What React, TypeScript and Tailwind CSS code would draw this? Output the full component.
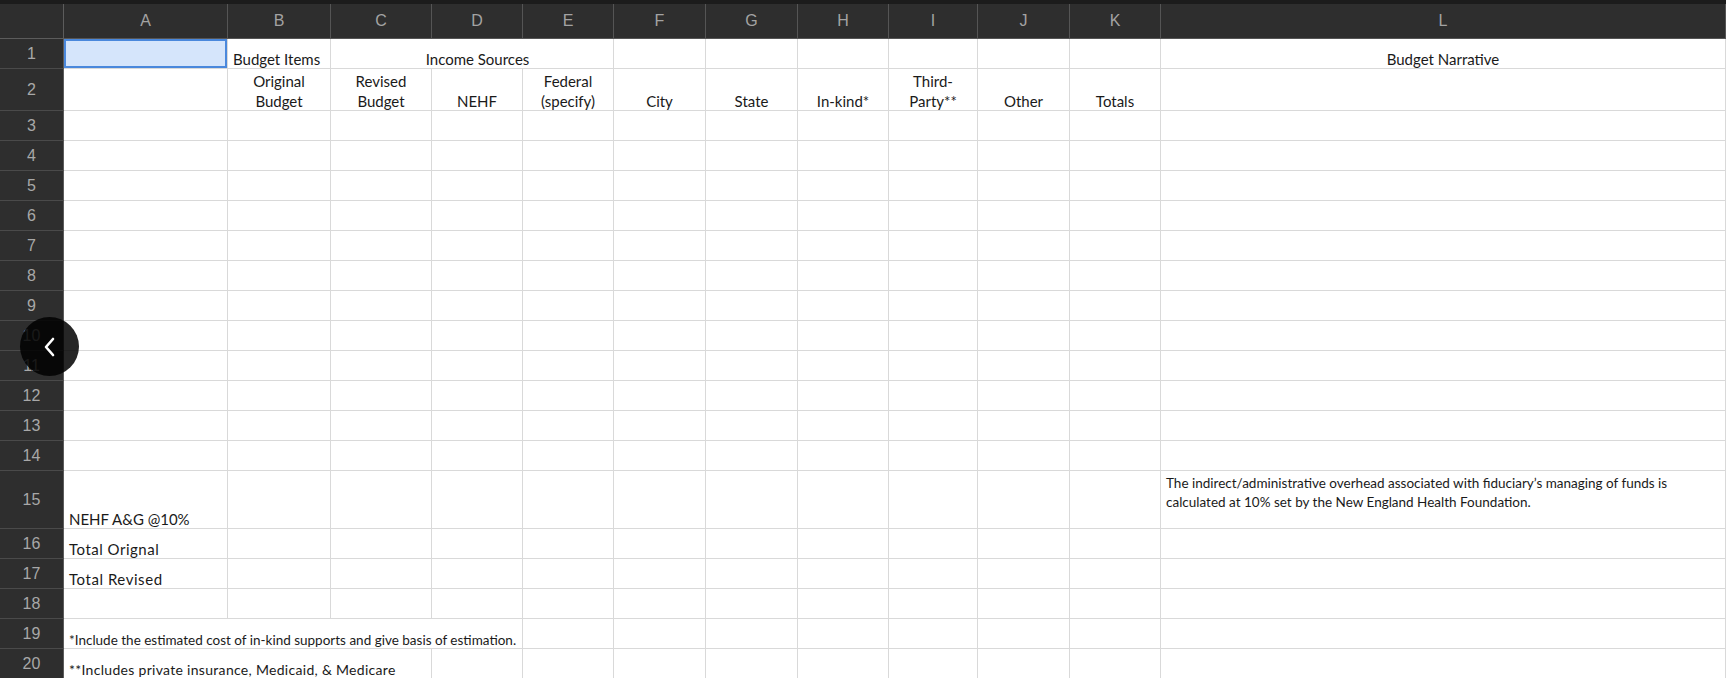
import React from "react";

type Cell = {
  text?: React.ReactNode;
  span?: number;
  align?: "left" | "center";
  small?: "a" | "b";
  top?: boolean;
  selected?: boolean;
  extra?: string;
};

const cols = ["A", "B", "C", "D", "E", "F", "G", "H", "I", "J", "K", "L"];

function emptyRow(): Cell[] {
  return cols.map(() => ({}));
}

function buildRows(): Cell[][] {
  const rows: Cell[][] = [];
  rows.push([
    { selected: true },
    { text: "Budget Items", align: "left" },
    { text: "Income Sources", span: 3, align: "center", extra: "pl-[16px]" },
    {}, {}, {}, {}, {}, {},
    { text: "Budget Narrative", align: "center" },
  ]);
  rows.push([
    {},
    { text: <>Original<br />Budget</>, align: "center" },
    { text: <>Revised<br />Budget</>, align: "center" },
    { text: "NEHF", align: "center" },
    { text: <>Federal<br />(specify)</>, align: "center" },
    { text: "City", align: "center" },
    { text: "State", align: "center" },
    { text: "In-kind*", align: "center" },
    { text: <>Third-<br />Party**</>, align: "center" },
    { text: "Other", align: "center" },
    { text: "Totals", align: "center" },
    {},
  ]);
  for (let i = 3; i <= 14; i++) rows.push(emptyRow());
  const r15 = emptyRow();
  r15[0] = { text: "NEHF A&G @10%" };
  r15[11] = {
    text: (
      <>
        The indirect/administrative overhead associated with fiduciary’s managing of funds is
        <br />
        calculated at 10% set by the New England Health Foundation.
      </>
    ),
    small: "a",
    top: true,
  };
  rows.push(r15);
  const r16 = emptyRow();
  r16[0] = { text: "Total Orignal", extra: "tracking-[0.5px]" };
  rows.push(r16);
  const r17 = emptyRow();
  r17[0] = { text: "Total Revised", extra: "tracking-[0.55px]" };
  rows.push(r17);
  rows.push(emptyRow());
  rows.push([
    { text: "*Include the estimated cost of in-kind supports and give basis of estimation.", span: 4, small: "a" },
    {}, {}, {}, {}, {}, {}, {}, {},
  ]);
  rows.push([
    { text: "**Includes private insurance, Medicaid, & Medicare", span: 3, small: "b", extra: "tracking-[0.3px]" },
    {}, {}, {}, {}, {}, {}, {}, {}, {},
  ]);
  return rows;
}

const rowHeights = ["h-[30px]", "h-[42px]", ...Array(12).fill("h-[30px]"), "h-[58px]", ...Array(5).fill("h-[30px]")];

export default function App() {
  const rows = buildRows();
  return (
    <div className="relative w-[1726px] h-[678px] overflow-hidden bg-white">
      <div className="h-[4px] bg-[#1c1c1c]" />
      <div
        className="grid grid-cols-[64px_164px_103px_101px_91px_91px_92px_92px_91px_89px_92px_91px_1fr]"
        style={{ fontFamily: "Lato, 'Noto Sans', sans-serif" }}
      >
        <div className="h-[35px] bg-[#2e2e2e] border-r border-b border-[#5c5c5c]" />
        {cols.map((c) => (
          <div
            key={c}
            className="h-[35px] bg-[#2e2e2e] border-r border-b border-[#555555] flex items-center justify-center text-[16px] text-[#a3a3a3]"
            style={{ fontFamily: "'Liberation Sans', Arial, sans-serif" }}
          >
            {c}
          </div>
        ))}
        {rows.map((row, ri) => {
          const h = rowHeights[ri];
          return (
            <React.Fragment key={ri}>
              <div
                className={`${h} bg-[#2e2e2e] border-r border-b border-r-[#5c5c5c] border-b-[#4a4a4a] flex items-center justify-center text-[16px] text-[#a8a8a8]`}
                style={{ fontFamily: "'Liberation Sans', Arial, sans-serif" }}
              >
                {ri + 1}
              </div>
              {row.map((cell, ci) => {
                const span =
                  cell.span === 4 ? "col-span-4" : cell.span === 3 ? "col-span-3" : "";
                const align = cell.align === "center" ? "justify-center text-center" : "justify-start text-left";
                let vAlign = "items-end";
                let size = "text-[15px] leading-[20px]";
                let shift = "relative top-[1px]";
                if (cell.top) {
                  vAlign = "items-start pt-[3px]";
                  size = "text-[13.5px] leading-[19px]";
                  shift = "";
                } else if (cell.small === "a") {
                  size = "text-[13.5px] leading-[16px]";
                  shift = "";
                } else if (cell.small === "b") {
                  size = "text-[14px] leading-[16px]";
                  shift = "";
                }
                const sel = cell.selected
                  ? "bg-[#d5e5fb] shadow-[inset_0_0_0_2px_#4a88dc]"
                  : "bg-white";
                return (
                  <div
                    key={ci}
                    className={`${h} ${span} ${sel} border-r border-b border-[#d9d9d9] flex ${align} ${vAlign} px-[5px] ${size} text-[#1a1a1a] whitespace-nowrap ${cell.extra ?? ""}`}
                  >
                    {cell.text ? <span className={shift}>{cell.text}</span> : null}
                  </div>
                );
              })}
            </React.Fragment>
          );
        })}
      </div>
      <div className="absolute left-[20px] top-[317px] w-[59px] h-[59px] rounded-full bg-black/85 flex items-center justify-center">
        <svg width="14" height="20" viewBox="0 0 14 20" fill="none">
          <path d="M10 2 L3 10 L10 18" stroke="white" strokeWidth="2.6" strokeLinecap="round" strokeLinejoin="round" />
        </svg>
      </div>
    </div>
  );
}
